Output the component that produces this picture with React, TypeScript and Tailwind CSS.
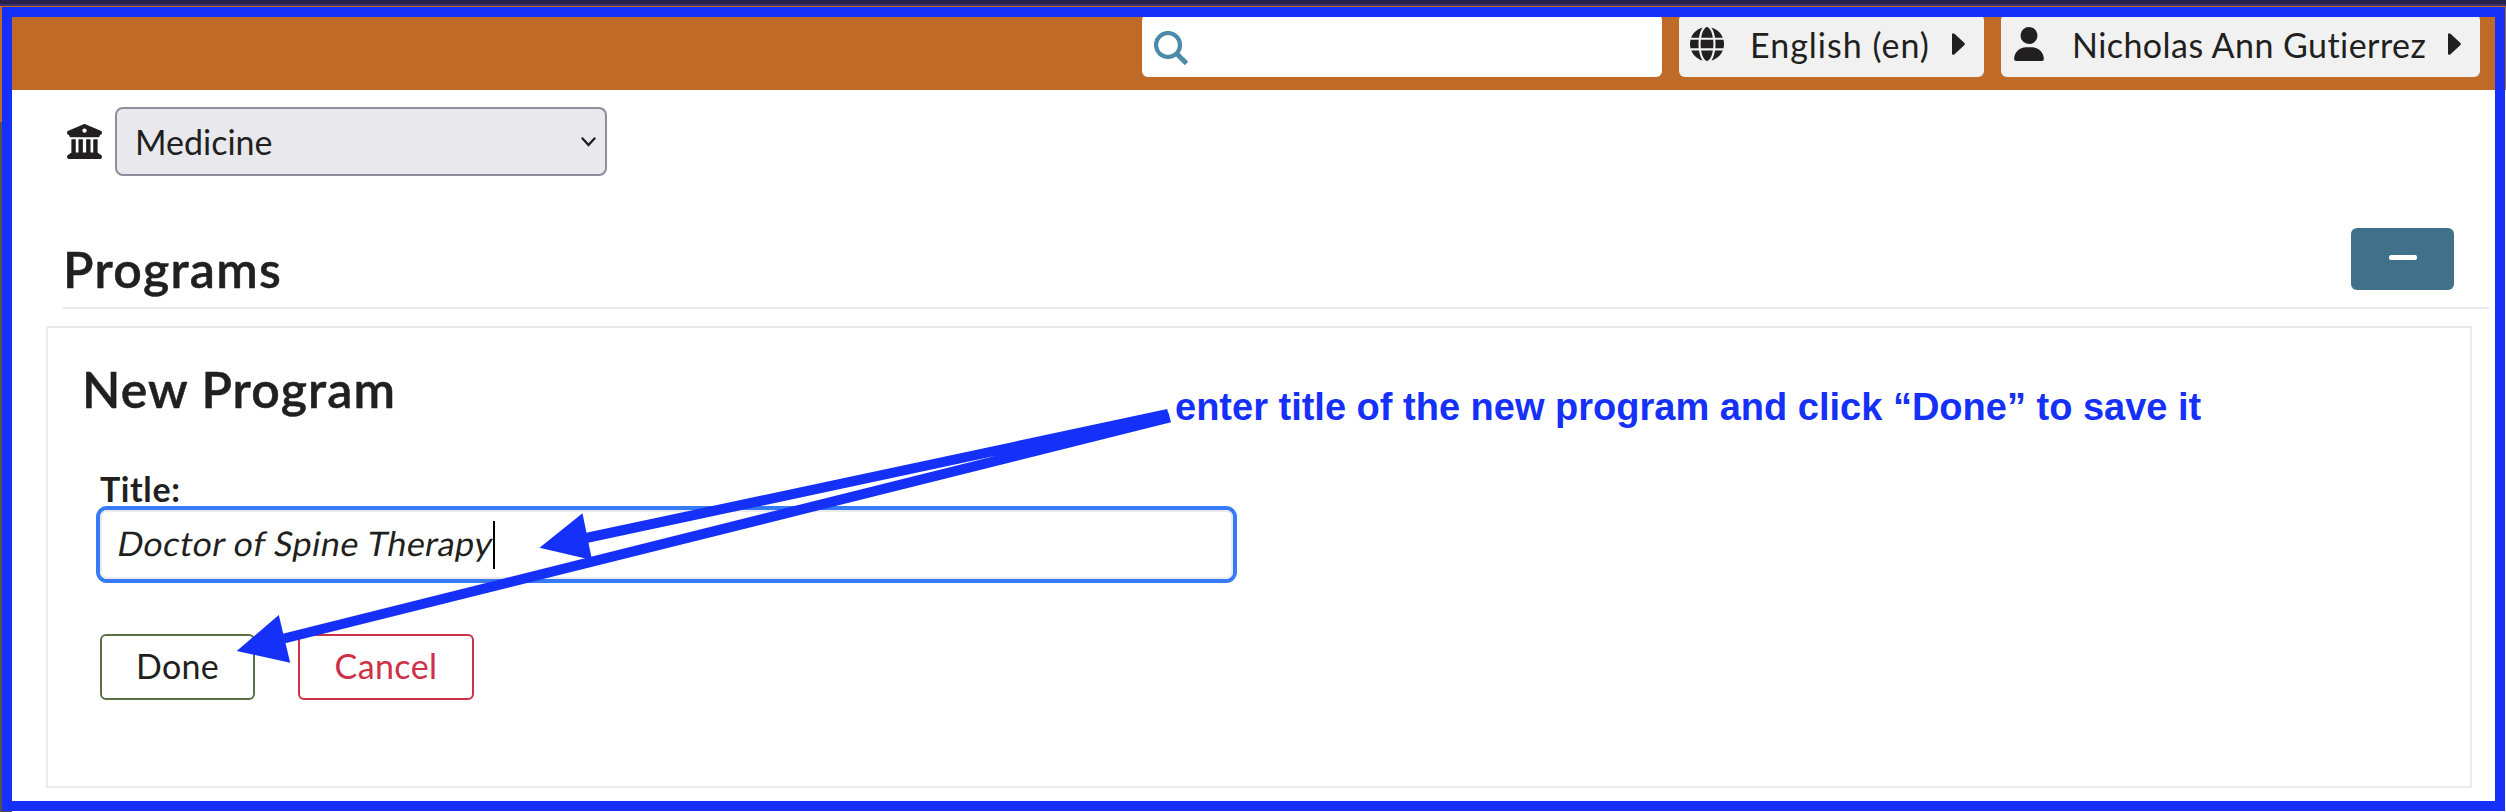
import React from "react";
import { FaGlobe, FaUser, FaBuildingColumns } from "react-icons/fa6";

const Caret = () => (
  <svg viewBox="0 0 13 22" className="h-[22px] w-[13px] shrink-0 fill-[#221f20]">
    <path d="M0 1.8C0 .2 1.4-.4 2.5.7l9.7 9c.9.8.9 1.8 0 2.6l-9.7 9C1.400 22.400 0 21.800 0 20.200Z" />
  </svg>
);

function Header() {
  return (
    <header className="flex h-[84px] shrink-0 items-start bg-[#bf6a27] pl-[1142px] pt-[8px]">
      <label className="flex h-[63px] w-[520px] items-start rounded-[6px] bg-white pl-[12px] pt-[17px]">
        <svg viewBox="0 0 34 34" className="h-[34px] w-[34px] fill-none stroke-[#4c8ba8]">
          <circle cx="14" cy="14" r="12" strokeWidth="4.200" />
          <path d="M23 23 32.500 32.500" strokeWidth="4.800" />
        </svg>
      </label>
      <button className="ml-[17px] flex h-[63px] w-[305px] items-start rounded-[6px] bg-[#f1f1f1] pl-[11px] pt-[13px]">
        <FaGlobe className="h-[34px] w-[34px] shrink-0" />
        <span className="-mt-[2px] ml-[26px] w-[183px] whitespace-nowrap text-left text-[34px] leading-[40px] tracking-[1px]">English (en)</span>
        <span className="ml-[19px] mt-[6px]"><Caret /></span>
      </button>
      <button className="ml-[17px] flex h-[63px] w-[479px] items-start rounded-[6px] bg-[#f1f1f1] pl-[13px] pt-[13px]">
        <FaUser className="h-[34px] w-[30px] shrink-0" />
        <span className="-mt-[2px] ml-[28px] w-[356px] whitespace-nowrap text-left text-[34px] leading-[40px] tracking-[0.45px]">Nicholas Ann Gutierrez</span>
        <span className="ml-[20px] mt-[6px]"><Caret /></span>
      </button>
    </header>
  );
}

function SchoolPicker() {
  return (
    <div className="mt-[17px] flex h-[69px] pl-[67px]">
      <FaBuildingColumns className="mt-[17px] h-[35px] w-[35px]" />
      <div className="ml-[13px] flex h-[69px] w-[492px] items-center justify-between rounded-[8px] border-2 border-[#8f8d9c] bg-[#e9e8ed] pl-[18px] pr-[9px]">
        <span className="text-[34px] leading-[40px]">Medicine</span>
        <svg viewBox="0 0 15 10" className="h-[10px] w-[15px] fill-none stroke-[#221f20] stroke-[2.4]">
          <path d="m1.500 1.500 6 6.500 6-6.500" strokeLinecap="round" />
        </svg>
      </div>
    </div>
  );
}

function ProgramForm() {
  return (
    <section className="ml-[46px] mt-[17px] h-[462px] w-[2426px] border-2 border-[#e7ebee]">
      <h2 className="ml-[34px] mt-[31px] h-[60px] text-[50px] font-semibold leading-[60px] tracking-[1.1px] [-webkit-text-stroke:0.5px_#221f20]">New Program</h2>
      <label className="ml-[52px] mt-[50px] block h-[40px] text-[34px] font-bold leading-[40px] tracking-[0.6px]">Title:</label>
      <div className="-mt-[3px] ml-[48px] flex h-[77px] w-[1141px] items-center rounded-[11px] border-4 border-[#367af6] bg-white">
        <div className="flex h-full w-full items-center rounded-[7px] border-2 border-[#ebebed] pl-[16px]">
          <span className="-mt-[3px] w-[375px] -skew-x-[10deg] whitespace-nowrap text-[34px] leading-[40px] tracking-[0.5px]">Doctor of Spine Therapy</span>
          <span className="h-[48px] w-[2px] bg-black" />
        </div>
      </div>
      <div className="ml-[52px] mt-[51px] flex gap-[43px]">
        <button className="h-[66px] w-[155px] rounded-[6px] border-2 border-[#5a7148] pb-[2px] text-[34px] leading-[40px] tracking-[0.3px]">Done</button>
        <button className="h-[66px] w-[176px] rounded-[6px] border-2 border-[#ce3048] pb-[2px] text-[34px] leading-[40px] tracking-[0.4px] text-[#ce3048]">Cancel</button>
      </div>
    </section>
  );
}

function Annotations() {
  return (
    <>
      <div className="absolute left-0 top-[90px] h-[32px] w-[2px] bg-[#bf6a27]" />
      <div className="absolute left-0 top-[122px] h-[690px] w-[2px] bg-[#555250]" />
      <div className="absolute left-0 top-[811px] h-px w-[12px] bg-[#555250]" />
      <div className="absolute left-[2px] top-[7px] h-[804px] w-[2503px] border-[10px] border-[#1531f9]" />
      <svg viewBox="0 0 2506 812" className="absolute left-0 top-0 h-[812px] w-[2506px] fill-[#1531f9] stroke-[#1531f9]">
        <path d="M1168.300 414 586 538M1169.800 417.500 284 638.500" strokeWidth="10" />
        <path stroke="none" d="M539.500 547.700 582.500 513.300 592 560ZM236.700 651 278.800 615 290.200 662.700Z" />
      </svg>
      <p className="absolute left-[1175px] top-[384px] whitespace-nowrap font-['Liberation_Sans',Arial,sans-serif] text-[38px] font-bold leading-[46px] text-[#1531f9]">
        enter title of the new program and click “Done” to save it
      </p>
    </>
  );
}

export default function App() {
  return (
    <div className="relative flex h-[812px] w-[2506px] flex-col overflow-hidden bg-white font-[Lato,sans-serif] text-[#221f20] [font-variant-ligatures:none]">
      <div className="h-[4px] shrink-0 bg-[#261e4b]" />
      <div className="h-[2px] shrink-0 bg-[#3b316b]" />
      <Header />
      <SchoolPicker />
      <div className="ml-[63px] mt-[52px] flex h-[81px] w-[2426px] items-start justify-between border-b-2 border-[#e7ebee] pr-[35px]">
        <h1 className="mt-[11px] text-[50px] font-semibold leading-[60px] tracking-[1.3px] [-webkit-text-stroke:0.5px_#221f20]">Programs</h1>
        <button className="flex h-[62px] w-[103px] justify-center rounded-[6px] bg-[#41718a] pt-[27px]">
          <span className="ml-[1px] h-[5px] w-[28px] rounded-[2px] bg-white" />
        </button>
      </div>
      <ProgramForm />
      <Annotations />
    </div>
  );
}
